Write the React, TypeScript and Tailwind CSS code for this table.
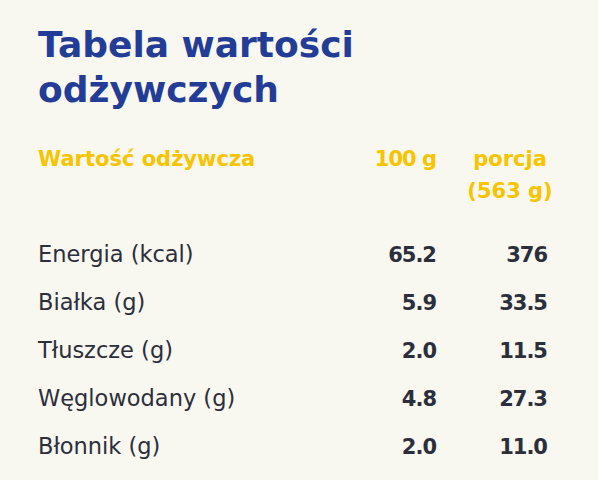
const rows = [
  { label: "Energia (kcal)", per100: "65.2", portion: "376" },
  { label: "Białka (g)", per100: "5.9", portion: "33.5" },
  { label: "Tłuszcze (g)", per100: "2.0", portion: "11.5" },
  { label: "Węglowodany (g)", per100: "4.8", portion: "27.3" },
  { label: "Błonnik (g)", per100: "2.0", portion: "11.0" },
];

export default function App() {
  return (
    <div className="min-h-[480px] w-full bg-[#f8f7f0] pl-[38px] pr-[51px] pt-[22px] font-['DejaVu_Sans',sans-serif]">
      <h1 className="text-[36px] font-bold leading-[45px] text-[#233c96]">
        Tabela wartości
        <br />
        odżywczych
      </h1>

      <div className="mt-[31px] grid grid-cols-[1fr_100px_111px] text-[21px] font-bold leading-[32px] text-[#f6c500]">
        <div>Wartość odżywcza</div>
        <div className="text-right tracking-[-1px]">100 g</div>
        <div className="ml-[24px] mr-[-13px] text-center">
          porcja
          <br />
          (563 g)
        </div>
      </div>

      <div className="mt-[23px] flex flex-col text-[#2c2f3b]">
        {rows.map((r) => (
          <div key={r.label} className="grid grid-cols-[1fr_100px_111px] items-baseline">
            <div className="text-[22.5px] font-normal leading-[48px]">{r.label}</div>
            <div className="text-right text-[21px] font-bold leading-[32px] tracking-[-1px]">{r.per100}</div>
            <div className="text-right text-[21px] font-bold leading-[32px] tracking-[-1px]">{r.portion}</div>
          </div>
        ))}
      </div>
    </div>
  );
}
